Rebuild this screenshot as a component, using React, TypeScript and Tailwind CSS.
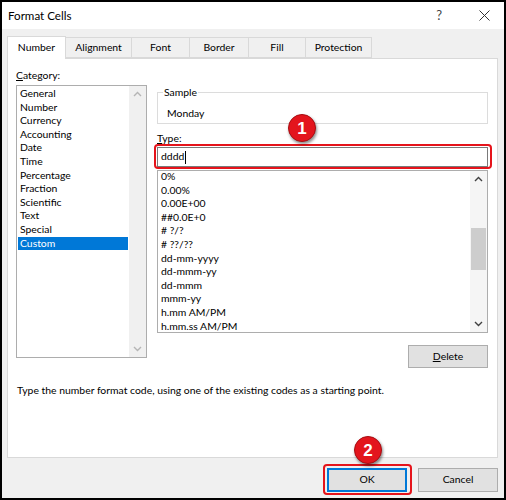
import React from "react";

const categories = [
  "General",
  "Number",
  "Currency",
  "Accounting",
  "Date",
  "Time",
  "Percentage",
  "Fraction",
  "Scientific",
  "Text",
  "Special",
  "Custom",
];

const formats = [
  "0%",
  "0.00%",
  "0.00E+00",
  "##0.0E+0",
  "# ?/?",
  "# ??/??",
  "dd-mm-yyyy",
  "dd-mmm-yy",
  "dd-mmm",
  "mmm-yy",
  "h.mm AM/PM",
  "h.mm.ss AM/PM",
];

function Chevron({ up, color }: { up: boolean; color: string }) {
  return (
    <svg width="9" height="6" viewBox="0 0 9 6">
      <polyline
        points={up ? "1,5 4.5,1.5 8,5" : "1,1 4.5,4.5 8,1"}
        fill="none"
        stroke={color}
        strokeWidth="1.4"
      />
    </svg>
  );
}

function Badge({ n }: { n: string }) {
  return (
    <div className="w-[28px] h-[28px] rounded-full bg-[#e3151d] border border-[#a80d12] shadow-[1px_2px_3px_rgba(0,0,0,0.45)] flex items-center justify-center text-white font-bold text-[17px] leading-none font-['Liberation_Sans',sans-serif]">
      {n}
    </div>
  );
}

const tabs = [
  { label: "Number", w: "w-[59px]" },
  { label: "Alignment", w: "w-[66px]" },
  { label: "Font", w: "w-[58px]" },
  { label: "Border", w: "w-[59px]" },
  { label: "Fill", w: "w-[57px]" },
  { label: "Protection", w: "w-[66px]" },
];

export default function App() {
  return (
    <div className="w-[506px] h-[500px] border-2 border-black bg-[#f0f0f0] flex flex-col text-[10.4px] text-black font-['Lato',sans-serif] relative overflow-hidden">
      {/* Title bar */}
      <div className="h-[27px] bg-white flex items-center pl-[6px] pr-[14px] shrink-0">
        <span className="text-[11.6px]">Format Cells</span>
        <span className="ml-auto text-[13px] text-[#444] mr-[37px]">?</span>
        <svg width="11" height="11" viewBox="0 0 11 11">
          <path d="M0.5 0.5 L10.5 10.5 M10.5 0.5 L0.5 10.5" stroke="#333" strokeWidth="1" />
        </svg>
      </div>

      {/* Tabs */}
      <div className="mt-[7px] h-[22px] pl-[5px] flex items-end shrink-0 relative z-10">
        {tabs.map((t, i) =>
          i === 0 ? (
            <div
              key={t.label}
              className={`${t.w} h-[23px] bg-white border border-b-0 border-[#d9d9d9] flex items-center justify-center mb-[-1px] pb-[1px]`}
            >
              {t.label}
            </div>
          ) : (
            <div
              key={t.label}
              className={`${t.w} h-[21px] bg-[#f0f0f0] border border-l-0 border-[#d9d9d9] flex items-center justify-center`}
            >
              {t.label}
            </div>
          )
        )}
      </div>

      {/* Panel */}
      <div className="ml-[5px] w-[491px] h-[400px] bg-white border border-[#d9d9d9] flex flex-col shrink-0">
        <div className="flex items-start pl-[8px]">
          {/* Left column */}
          <div className="w-[131px] mt-[9px] flex flex-col">
            <div className="h-[14px] leading-[14px]">
              <span className="underline">C</span>ategory:
            </div>
            <div className="mt-[3px] h-[273px] border border-[#adadad] flex">
              <div className="flex-1 ml-[1px] mr-[1px] pt-[1px] flex flex-col">
                {categories.map((c) => (
                  <div
                    key={c}
                    className={`h-[13.6px] leading-[13.6px] pl-[2px] ${
                      c === "Custom" ? "bg-[#0078d7] text-white" : ""
                    }`}
                  >
                    {c}
                  </div>
                ))}
              </div>
              <div className="w-[17px] bg-[#f0f0f0] flex flex-col items-center justify-between py-[5px]">
                <Chevron up color="#b5b5b5" />
                <Chevron up={false} color="#b5b5b5" />
              </div>
            </div>
          </div>

          {/* Right column */}
          <div className="ml-[10px] w-[331px] flex flex-col">
            <div className="mt-[33px] h-[32px] border border-[#dcdcdc] relative">
              <span className="absolute left-[5px] top-[-8px] bg-white px-[1px] leading-[14px]">
                Sample
              </span>
              <div className="pl-[9px] pt-[13px] leading-[14px]">Monday</div>
            </div>
            <div className="mt-[7px] h-[14px] leading-[14px]">
              <span className="underline">T</span>ype:
            </div>
            <div className="mt-[2px] h-[20px] relative">
              <div className="h-full border border-[#7a7a7a] flex items-center pl-[3px]">
                <span>dddd</span>
                <span className="w-[1px] h-[13px] bg-black ml-[1px]" />
              </div>
              <div className="absolute -left-[3px] -right-[4px] -top-[3px] -bottom-[2px] border-2 border-[#e5141b] rounded-[4px]" />
              <div className="absolute left-[131px] -top-[33px] z-20">
                <Badge n="1" />
              </div>
            </div>
            <div className="mt-[3px] h-[163px] border border-[#adadad] flex overflow-hidden">
              <div className="flex-1 pl-[3px] flex flex-col -mt-[1px]">
                {formats.map((f) => (
                  <div key={f} className="h-[13.6px] leading-[13.6px]">
                    {f}
                  </div>
                ))}
              </div>
              <div className="w-[17px] bg-[#f5f5f5] flex flex-col items-center py-[5px]">
                <Chevron up color="#404040" />
                <div className="mt-[46px] w-[15px] h-[42px] bg-[#cdcdcd]" />
                <div className="mt-auto">
                  <Chevron up={false} color="#404040" />
                </div>
              </div>
            </div>
            <div className="mt-[12px] flex justify-end">
              <button className="w-[80px] h-[23px] bg-[#e1e1e1] border border-[#adadad] flex items-center justify-center">
                <span className="underline">D</span>elete
              </button>
            </div>
          </div>
        </div>
        <div className="mt-[15px] ml-[9px] leading-[14px]">
          Type the number format code, using one of the existing codes as a starting point.
        </div>
      </div>

      {/* Footer */}
      <div className="mt-[10px] h-[24px] flex justify-end pr-[6px] gap-[11px] shrink-0">
        <div className="relative">
          <button className="w-[80px] h-[24px] bg-[#e1e1e1] border-2 border-[#0078d7] flex items-center justify-center">
            OK
          </button>
          <div className="absolute -left-[4px] -right-[5px] -top-[4px] -bottom-[3px] border-2 border-[#e5141b] rounded-[4px]" />
          <div className="absolute left-[27px] -top-[32px]">
            <Badge n="2" />
          </div>
        </div>
        <button className="w-[80px] h-[24px] bg-[#e1e1e1] border border-[#adadad] flex items-center justify-center">
          Cancel
        </button>
      </div>
    </div>
  );
}
